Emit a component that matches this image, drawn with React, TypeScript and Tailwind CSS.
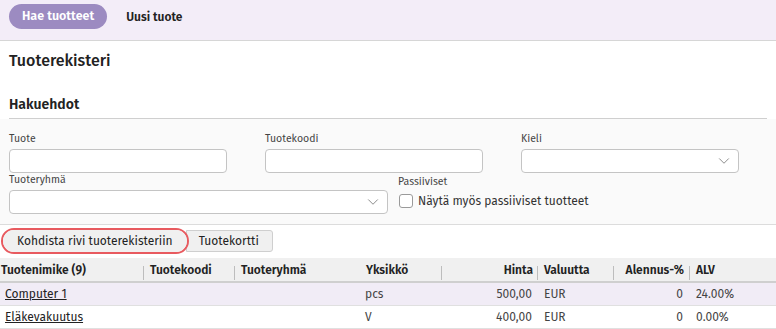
import { ChevronDown } from "lucide-react";

const font = { fontFamily: '"Fira Sans", "Noto Sans", "Open Sans", sans-serif' };

const rows = [
  { name: "Computer 1", code: "", group: "", unit: "pcs", price: "500,00", cur: "EUR", disc: "0", vat: "24.00%" },
  { name: "Eläkevakuutus", code: "", group: "", unit: "V", price: "400,00", cur: "EUR", disc: "0", vat: "0.00%" },
];

function Field({ label, width, select }: { label: string; width: string; select?: boolean }) {
  return (
    <div className={`flex flex-col ${width}`}>
      <span className="text-[10.5px] leading-[14px] text-[#444] mb-[3px]">{label}</span>
      <div className="h-[24px] rounded-[4px] border border-[#c4c4c4] bg-white flex items-center justify-end pr-[5px]">
        {select && <ChevronDown size={18} strokeWidth={1.3} className="text-[#8a8a8a]" />}
      </div>
    </div>
  );
}

// header cell with the short divider line at its left edge
function Th({ children, width, right, sep = true, pad = "px-[6px]" }: { children: string; width?: string; right?: boolean; sep?: boolean; pad?: string }) {
  return (
    <th className={`${width ?? ""} p-0 font-semibold`}>
      <div className="flex items-end h-[23px]">
        <span className={`w-px h-[14px] mb-[1px] ${sep ? "bg-[#bdbdbd]" : "bg-transparent"}`} />
        <span className={`flex-1 self-center ${pad} ${right ? "text-right" : "text-left"}`}>{children}</span>
      </div>
    </th>
  );
}

export default function App() {
  return (
    <div className="w-[776px] h-[329px] overflow-hidden bg-white text-[#222]" style={font}>
      {/* top navigation */}
      <div className="h-[41px] bg-[#f3edf8] border-b border-[#d6d6d6] flex items-start gap-[19px] pl-[9px] pt-[4px]">
        <button className="h-[25px] px-[13px] rounded-full bg-[#9c8bc1] text-white text-[12.5px] font-semibold">Hae tuotteet</button>
        <button className="h-[25px] text-[12px] font-semibold text-[#222]">Uusi tuote</button>
      </div>

      <div className="px-[9px] pt-[9px]">
        <h1 className="text-[16px] leading-[22px] font-medium">Tuoterekisteri</h1>
        <h2 className="mt-[23px] text-[14px] leading-[20px] font-semibold pb-[3px] border-b border-[#cfcfcf]">Hakuehdot</h2>
      </div>

      {/* search form */}
      <div className="bg-[#fafafa] border-b border-[#dcdcdc] px-[9px] pt-[13px] pb-[10px] flex flex-col gap-0">
        <div className="flex gap-[38px]">
          <Field label="Tuote" width="w-[218px]" />
          <Field label="Tuotekoodi" width="w-[218px]" />
          <Field label="Kieli" width="w-[218px]" select />
        </div>
        <div className="flex gap-[10px]">
          <Field label="Tuoteryhmä" width="w-[379px]" select />
          <div className="flex flex-col">
            <span className="text-[10.5px] leading-[14px] text-[#444] mt-[2px] mb-[4px]">Passiiviset</span>
            <label className="flex items-center gap-[5px]">
              <span className="w-[14px] h-[14px] rounded-[3px] border border-[#9a9a9a] bg-white ml-[1px]" />
              <span className="text-[12px] leading-[16px] text-[#333]">Näytä myös passiiviset tuotteet</span>
            </label>
          </div>
        </div>
      </div>

      {/* actions */}
      <div className="flex items-center pl-[1px] pt-[3px] pb-[3px]">
        <div className="relative z-10 rounded-full border-2 border-[#e85a5f] flex">
          <button className="h-[22px] px-[14px] bg-[#f0f0f0] rounded-full text-[12px] text-[#222]">Kohdista rivi tuoterekisteriin</button>
        </div>
        <button className="h-[22px] pl-[12px] pr-[13px] -ml-[3px] bg-[#f0f0f0] border border-[#cfcfcf] rounded-r-[3px] text-[12px] text-[#222]">Tuotekortti</button>
      </div>

      {/* table */}
      <table className="w-full border-collapse text-[12px] mt-[1px]">
        <thead>
          <tr className="bg-[#f0f0f0] border-b-2 border-[#cfcfcf]">
            <Th width="w-[143px]" sep={false} pad="pl-0">Tuotenimike (9)</Th>
            <Th width="w-[91px]">Tuotekoodi</Th>
            <Th width="w-[131px]">Tuoteryhmä</Th>
            <Th width="w-[76px]" sep={false} pad="pl-[0px]">Yksikkö</Th>
            <Th width="w-[96px]" right pad="pr-[4px]">Hinta</Th>
            <Th width="w-[76px]">Valuutta</Th>
            <Th width="w-[76px]" right pad="pr-[5px]">Alennus-%</Th>
            <Th>ALV</Th>
          </tr>
        </thead>
        <tbody>
          {rows.map((r, i) => (
            <tr key={r.name} className={`h-[23px] border-b border-[#e0e0e0] ${i === 0 ? "bg-[#f1ecf6]" : "bg-white"}`}>
              <td className="pl-[5px]"><span className="underline">{r.name}</span></td>
              <td className="pl-[8px]">{r.code}</td>
              <td className="pl-[8px]">{r.group}</td>
              <td className="pl-0 text-[#444]">{r.unit}</td>
              <td className="text-right pr-[5px] text-[#444]">{r.price}</td>
              <td className="pl-[7px] text-[#444]">{r.cur}</td>
              <td className="text-right pr-[6px] text-[#444]">{r.disc}</td>
              <td className="pl-[7px] text-[#444]">{r.vat}</td>
            </tr>
          ))}
        </tbody>
      </table>
    </div>
  );
}
